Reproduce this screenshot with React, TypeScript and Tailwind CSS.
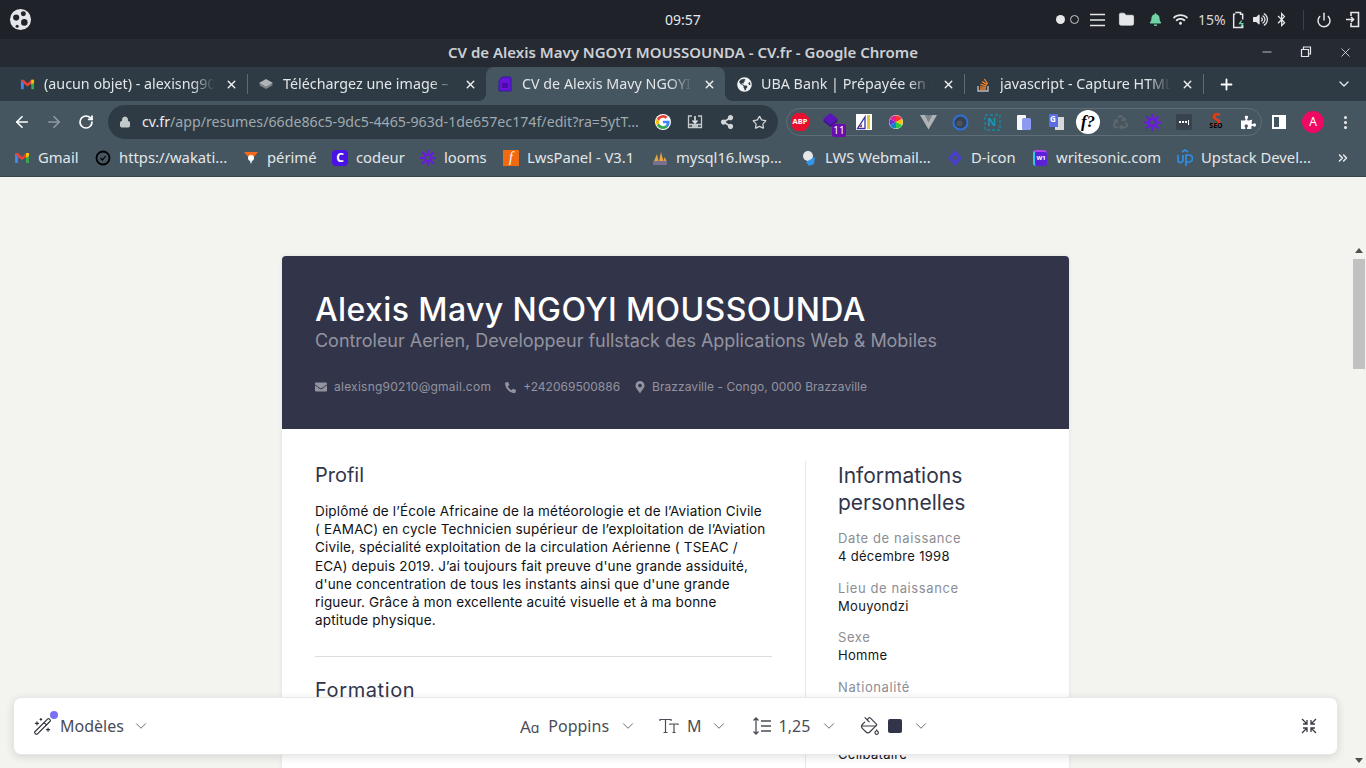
import React from 'react';
import { ArrowLeft, ArrowRight, RotateCw, Lock, Star, Plus, X, ChevronDown, Power, Folder, WandSparkles, PaintBucket, MoreVertical, ChevronsRight, Minus } from 'lucide-react';
import { FaBell, FaBluetoothB, FaEnvelope, FaGlobeAmericas, FaMapMarkerAlt, FaPhoneAlt, FaPuzzlePiece, FaRecycle, FaShareAlt, FaVolumeUp, FaWifi } from 'react-icons/fa';

const ui = "font-['Noto_Sans',sans-serif]";
const page = "font-['Inter',sans-serif]";

const Gmail = ({ size = 16 }: { size?: number }) => (
  <svg width={size} height={size} viewBox="0 0 16 16" className="shrink-0">
    <path d="M1 3v10h3V7z" fill="#4285f4" />
    <path d="M15 3v10h-3V7z" fill="#34a853" />
    <path d="M1 3l3 0 4 4 4-4 3 0-3 4-4 3-4-3z" fill="#ea4335" />
    <path d="M12 3l3 0 0 3-3 2z" fill="#fbbc04" />
  </svg>
);

const Flower = ({ size = 16 }: { size?: number }) => (
  <svg width={size} height={size} viewBox="0 0 16 16" className="shrink-0">
    <circle cx="8" cy="8" r="3.4" fill="none" stroke="#6a1be0" strokeWidth="2.400" />
    <g stroke="#6a1be0" strokeWidth="2.100">
      <path d="M8 0v3.500M8 12.500V16M0 8h3.500M12.500 8H16M2.300 2.300l2.500 2.500M11.200 11.200l2.500 2.500M13.700 2.300l-2.500 2.500M4.800 11.200l-2.500 2.500" />
    </g>
  </svg>
);

const Tab = ({ icon, title, active }: { icon: React.ReactNode; title: string; active?: boolean }) => (
  <div className={`relative flex h-full w-[239px] shrink-0 items-center pl-[11px] pr-[9px] ${active ? 'rounded-t-lg bg-[#455661]' : ''}`}>
    {active && <span className="absolute bottom-0 -left-2 h-2 w-2 bg-[radial-gradient(circle_at_0_0,transparent_8px,#455661_8px)]" />}
    {active && <span className="absolute bottom-0 -right-2 h-2 w-2 bg-[radial-gradient(circle_at_100%_0,transparent_8px,#455661_8px)]" />}
    <span className="flex w-4 shrink-0 justify-center">{icon}</span>
    <span className="ml-[9px] w-[176px] overflow-hidden whitespace-nowrap text-[14.3px] text-[#e3e5e6] [mask-image:linear-gradient(to_right,black_84%,transparent_97%)]">{title}</span>
    <X size={13} strokeWidth={2.6} className="ml-[5px] shrink-0 text-[#f1f3f4]" />
  </div>
);

const Sep = () => <div className="-mr-px h-5 w-px shrink-0 bg-[#5f6b73]" />;

const Mark = ({ icon, label, w }: { icon: React.ReactNode; label: string; w: string }) => (
  <div className={`flex shrink-0 items-center gap-2 ${w}`}>
    <span className="flex w-4 shrink-0 justify-center">{icon}</span>
    <span className="whitespace-nowrap text-[14.8px] text-[#e3e6e8]">{label}</span>
  </div>
);

const Ext = ({ children }: { children: React.ReactNode }) => (
  <div className="relative flex h-6 w-8 shrink-0 items-center justify-center">{children}</div>
);

const TopPanel = () => (
  <div className="flex h-[39px] shrink-0 items-center bg-[#1f2229] text-[#e6e7e8]">
    <div className="flex w-[41px] justify-center">
      <svg width="23" height="23" viewBox="0 0 24 24">
        <circle cx="12" cy="12" r="11" fill="#e4e6e9" />
        <circle cx="7.5" cy="10" r="3.2" fill="#20232b" />
        <circle cx="15" cy="6" r="2.6" fill="#20232b" />
        <circle cx="16" cy="15" r="3.4" fill="#20232b" />
        <circle cx="8.5" cy="19" r="1.6" fill="#20232b" />
      </svg>
    </div>
    <div className={`${ui} ml-[622px] w-[40px] text-center text-[14px]`}>09:57</div>
    <div className="ml-[353px] flex items-center">
      <span className="h-[9px] w-[9px] rounded-full bg-[#e6e7e8]" />
      <span className="ml-[5px] h-[9px] w-[9px] rounded-full border border-[#c9cbce]" />
      <svg width="15" height="14" viewBox="0 0 15 14" className="ml-[11px]"><path d="M0 1.500h15M0 7h15M0 12.500h15" stroke="#e6e7e8" strokeWidth="1.600" /></svg>
      <Folder size={17} fill="#e6e7e8" strokeWidth={1} className="ml-[13px]" />
      <FaBell size={13} color="#6fd3a4" className="ml-[14px]" />
      <FaWifi size={15} className="ml-[11px]" />
      <span className={`${ui} ml-[10px] text-[14px] text-[#d7d9dc]`}>15%</span>
      <svg width="15" height="18" viewBox="0 0 14 17" className="ml-[6px]">
        <path d="M3 1.500h5v1.500h2v5M10 13v2.500H1.500V3H3" fill="none" stroke="#e6e7e8" strokeWidth="1.400" />
        <path d="M9 9l-2 3h3l-1.500 3" fill="none" stroke="#6fd3a4" strokeWidth="1.200" />
      </svg>
      <FaVolumeUp size={15} className="ml-[6px]" />
      <FaBluetoothB size={15} className="ml-[6px]" />
      <div className="ml-[14px] h-5 w-px bg-[#3d4047]" />
      <Power size={16} strokeWidth={2.200} className="ml-[12px]" />
      <svg width="14" height="17" viewBox="0 0 14 17" className="ml-[14px]">
        <path d="M5 5V1.500h7.500v14H5V12" fill="none" stroke="#e6e7e8" strokeWidth="1.600" />
        <path d="M0 8.500h7M5 6l2.500 2.500L5 11" fill="none" stroke="#e6e7e8" strokeWidth="1.600" />
      </svg>
    </div>
  </div>
);

const TitleBar = () => (
  <div className="relative flex h-[28px] shrink-0 items-center justify-center bg-[#262a33] pb-[2px]">
    <span className={`${ui} text-[15px] font-semibold text-[#cdd0d3]`}>CV de Alexis Mavy NGOYI MOUSSOUNDA - CV.fr - Google Chrome</span>
    <div className="absolute right-[13px] flex items-center gap-[26px] text-[#e6e7e8]">
      <Minus size={14} strokeWidth={1.300} />
      <svg width="12" height="12" viewBox="0 0 12 12"><path d="M3.500 3V1h7v7H8.500M1.500 3.500h7v7h-7z" fill="none" stroke="#e6e7e8" strokeWidth="1.200" /></svg>
      <X size={15} strokeWidth={1.300} />
    </div>
  </div>
);

const TabStrip = () => (
  <div className={`${ui} flex h-[34px] shrink-0 items-center bg-[#2e3b44] pl-2`}>
    <Tab icon={<Gmail size={15} />} title="(aucun objet) - alexisng90210@gmail.com" />
    <Sep />
    <Tab
      icon={<svg width="16" height="16" viewBox="0 0 16 16"><path d="M8 3l7 4-7 4-7-4z" fill="#aeb4b8" /><path d="M1 9l7 4 7-4-2-1-5 3-5-3z" fill="#7f878c" /></svg>}
      title="Téléchargez une image – Postimages"
    />
    <Tab
      active
      icon={<svg width="14" height="16" viewBox="0 0 14 16"><path d="M4 1h8l1 1v13H1V5z" fill="#6a12d8" stroke="#2c1a9c" strokeWidth="1" /><rect x="4" y="7" width="6" height="5" fill="#4a0ca8" /></svg>}
      title="CV de Alexis Mavy NGOYI MOUSSOUNDA"
    />
    <Tab icon={<FaGlobeAmericas size={15} color="#f1f3f4" />} title="UBA Bank | Prépayée en ligne Visa" />
    <Sep />
    <Tab
      icon={<svg width="14" height="16" viewBox="0 0 14 16"><path d="M2 10v5h10v-5" fill="none" stroke="#bcbbbb" strokeWidth="1.400" /><path d="M4 13h6M4 10.800l6 .6M4.500 8.300l5.800 1.500M6 5.600l5.200 3M8.300 3l3.500 5" stroke="#f48024" strokeWidth="1.300" /></svg>}
      title="javascript - Capture HTML Canvas"
    />
    <Sep />
    <Plus size={17} strokeWidth={2.600} className="ml-[15px] text-white" />
    <ChevronDown size={16} strokeWidth={2} className="ml-[101px] text-[#e6e7e8]" />
  </div>
);

const Toolbar = () => (
  <div className="flex h-[40px] shrink-0 items-center bg-[#455661] pt-[2px] text-[#e9ebec]">
    <ArrowLeft size={18} strokeWidth={2.200} className="ml-[13px] text-white" />
    <ArrowRight size={18} strokeWidth={2.200} className="ml-[14px] text-[#8f9aa2]" />
    <RotateCw size={16} strokeWidth={2.600} className="ml-[15px] text-white" />
    <div className="ml-[14px] flex h-[34px] w-[670px] shrink-0 items-center rounded-full bg-[#2e3b44] pl-[11px]">
      <Lock size={12} fill="#c3c8cb" stroke="#c3c8cb" />
      <span className={`${ui} ml-[11px] w-[507px] whitespace-nowrap text-[14.2px] text-[#9fa9af]`}><span className="text-[#eceeef]">cv.fr</span>/app/resumes/66de86c5-9dc5-4465-963d-1de657ec174f/edit?ra=5ytT...</span>
      <svg width="16" height="16" viewBox="0 0 48 48" className="ml-[6px] rounded-full bg-white">
        <path d="M44 24c0-1.500-.1-2.900-.4-4H24v8h11a10 10 0 0 1-4.400 6.500l7 5.400C42 36 44 30.500 44 24z" fill="#4285f4" />
        <path d="M24 45c5.700 0 10.500-1.900 14-5.100l-7-5.400c-1.900 1.300-4.300 2-7 2-5.400 0-10-3.600-11.600-8.500l-7.200 5.600C8.700 40.500 15.800 45 24 45z" fill="#34a853" />
        <path d="M12.400 28a12.600 12.600 0 0 1 0-8l-7.200-5.600a21 21 0 0 0 0 19.200z" fill="#fbbc05" />
        <path d="M24 11.500c3 0 5.800 1 8 3.100l6-6A21 21 0 0 0 5.200 14.400l7.200 5.600C14 15.100 18.600 11.500 24 11.500z" fill="#ea4335" />
      </svg>
      <svg width="16" height="16" viewBox="0 0 16 16" className="ml-[16px]">
        <path d="M5 2H1.500v11.500h13V2H11M1.500 10.500h13" fill="none" stroke="#c3c8cb" strokeWidth="1.300" />
        <path d="M8 2v6.500M5.500 6.500L8 9l2.500-2.500M5 12h6" fill="none" stroke="#dfe2e4" strokeWidth="1.600" />
      </svg>
      <FaShareAlt size={14} className="ml-[17px] text-[#d3d6d8]" />
      <Star size={15} strokeWidth={2} className="ml-[18px] text-[#d3d6d8]" />
    </div>
    <div className="ml-[8px] flex h-[28px] w-[476px] shrink-0 items-center rounded-full border border-[#5d6e78]">
      <div className="-ml-[3px] flex items-center">
        <Ext>
          <svg width="20" height="20" viewBox="0 0 20 20"><path d="M6 1h8l5 5v8l-5 5H6l-5-5V6z" fill="#e8102f" /></svg>
          <span className={`${ui} absolute text-[7.500px] font-bold text-white`}>ABP</span>
        </Ext>
        <Ext>
          <svg width="17" height="17" viewBox="0 0 17 17" className="-mt-1 -ml-[4px]"><path d="M8.500 1l7.500 6-7.500 6L1 7z" fill="#5a16b8" /><path d="M1 9l7.500 6 7.500-6-1.500-1-6 4.800-6-4.800z" fill="#3f0f92" /></svg>
          <span className={`${ui} absolute bottom-[-3px] right-[2px] flex h-[13px] w-[14px] items-center justify-center rounded-[2px] bg-[#6a0dad] text-[10px] text-white`}>11</span>
        </Ext>
        <Ext>
          <svg width="16" height="16" viewBox="0 0 16 16"><rect width="16" height="16" fill="#fff" /><path d="M1.500 14.500L9 3v11.500z" fill="none" stroke="#3731a8" strokeWidth="1.300" /><path d="M3 13l3-3v3z" fill="#d8232a" /><rect x="11" y="1" width="3" height="14" fill="#e3c93a" /></svg>
        </Ext>
        <Ext>
          <svg width="16" height="18" viewBox="0 0 16 18"><circle cx="8" cy="9" r="7" fill="#fff" /><path d="M8 9V2.500A6.500 6.500 0 0 1 14 6z" fill="#f33" /><path d="M8 9l6-3a6.500 6.500 0 0 1 0 6z" fill="#ffc800" /><path d="M8 9l6 3a6.500 6.500 0 0 1-6 3.500z" fill="#2ecc40" /><path d="M8 9v6.500A6.500 6.500 0 0 1 2 12z" fill="#18c" /><path d="M8 9L2 12a6.500 6.500 0 0 1 0-6z" fill="#6a2fd0" /><path d="M8 9L2 6a6.500 6.500 0 0 1 6-3.500z" fill="#e91e8c" /></svg>
        </Ext>
        <Ext>
          <svg width="17" height="16" viewBox="0 0 17 16"><path d="M0 1h5l3.500 7L12 1h5L8.500 15.500z" fill="#b0b4b6" /><path d="M5 1h3l.5 1 .5-1h3L8.500 8z" fill="#7f8589" /></svg>
        </Ext>
        <Ext>
          <svg width="17" height="17" viewBox="0 0 17 17"><circle cx="8.500" cy="8.500" r="7" fill="#33424d" stroke="#2f6fd6" strokeWidth="2" /><circle cx="7.500" cy="9.500" r="3" fill="#4a5560" /></svg>
        </Ext>
        <Ext>
          <svg width="17" height="17" viewBox="0 0 17 17"><rect x="1" y="1" width="15" height="15" fill="none" stroke="#0e8ea3" strokeWidth="1.300" strokeDasharray="3 2" /></svg>
          <span className={`${ui} absolute text-[11px] font-bold text-[#0e9ab0]`}>N</span>
        </Ext>
        <Ext>
          <svg width="16" height="17" viewBox="0 0 16 17"><rect x="1" y="1" width="9" height="15" rx="1" fill="#f6f7f9" /><rect x="6" y="4" width="9" height="12" rx="1.500" fill="#8c9af0" /></svg>
        </Ext>
        <Ext>
          <svg width="17" height="17" viewBox="0 0 17 17"><rect x="7" y="3" width="9" height="13" fill="#d7dadc" /><path d="M1 0h9v13H1z" fill="#5a6de6" /></svg>
          <span className={`${ui} absolute left-[10px] top-[3px] text-[8px] font-bold text-white`}>G</span>
        </Ext>
        <Ext>
          <div className="flex h-[24px] w-[24px] items-center justify-center rounded-full bg-white font-['Liberation_Serif',serif] text-[17px] font-bold italic text-black">f?</div>
        </Ext>
        <Ext><FaRecycle size={15} className="text-[#5f676d]" /></Ext>
        <Ext><Flower size={17} /></Ext>
        <Ext>
          <div className="flex h-4 w-4 items-center justify-center gap-[1px] rounded-[2px] bg-[#37424d]">
            <span className="h-[2px] w-[2px] bg-white" /><span className="h-[2px] w-[2px] bg-white" /><span className="h-[2px] w-[2px] bg-white" /><span className="h-[5px] w-px bg-white" />
          </div>
        </Ext>
        <Ext>
          <span className={`${ui} absolute top-[-2px] text-[17px] font-bold leading-[24px] text-[#e23a12]`}>S</span>
          <span className={`${ui} absolute top-[11px] text-[7px] font-bold leading-[10px] text-black`}>SEO</span>
        </Ext>
        <Ext><FaPuzzlePiece size={15} color="#fff" /></Ext>
      </div>
    </div>
    <div className="ml-[10px] flex h-[14px] w-[14px] shrink-0 justify-end border-[2px] border-white"><span className="h-full w-[5px] bg-white" /></div>
    <span className={`${ui} ml-[16px] flex h-[22px] w-[22px] shrink-0 items-center justify-center rounded-full bg-[#ee0a63] text-[12px] text-white`}>A</span>
    <MoreVertical size={17} strokeWidth={2.400} className="ml-[13px] text-[#e9ebec]" />
  </div>
);

const Bookmarks = () => (
  <div className={`${ui} flex h-[36px] shrink-0 items-center border-b border-[#39454d] bg-[#455661] pb-[2px] pl-[14px]`}>
    <Mark w="w-[81px]" label="Gmail" icon={<Gmail />} />
    <Mark w="w-[148px]" label="https://wakati..." icon={<svg width="16" height="16" viewBox="0 0 16 16"><circle cx="8" cy="8" r="6.500" fill="none" stroke="#000" strokeWidth="1.800" /><path d="M5.500 8l2 2 3-4" fill="none" stroke="#000" strokeWidth="1.200" /></svg>} />
    <Mark w="w-[89px]" label="périmé" icon={<svg width="16" height="16" viewBox="0 0 16 16"><path d="M1 2h14l-5 6H6z" fill="#f26a1b" /><circle cx="8" cy="8" r="3" fill="#fff" /><path d="M7 11h2l-1 3z" fill="#fff" /></svg>} />
    <Mark w="w-[88px]" label="codeur" icon={<span className="flex h-4 w-4 items-center justify-center rounded-[4px] bg-[#4a12e6] text-[12px] font-bold leading-none text-white">C</span>} />
    <Mark w="w-[83px]" label="looms" icon={<Flower />} />
    <Mark w="w-[149px]" label="LwsPanel - V3.1" icon={<span className="flex h-4 w-4 items-center justify-center bg-[#f26a0f] font-['Liberation_Serif',serif] text-[14px] italic leading-none text-white">f</span>} />
    <Mark w="w-[149px]" label="mysql16.lwsp..." icon={<svg width="16" height="16" viewBox="0 0 16 16"><path d="M2 11L5 4l1.500 7zM7 11l2-9 2.500 9zM11.500 11l1-4 2 4z" fill="#e8a33c" /><rect x="1" y="11" width="14" height="4" fill="#77708f" /></svg>} />
    <Mark w="w-[146px]" label="LWS Webmail..." icon={<svg width="16" height="16" viewBox="0 0 16 16"><circle cx="7" cy="6" r="5" fill="#e5e7e9" /><path d="M5 12l9-5-1 7-5 2z" fill="#2f96ea" /></svg>} />
    <Mark w="w-[85px]" label="D-icon" icon={<svg width="16" height="16" viewBox="0 0 16 16"><path d="M8 0l7 8-7 8-7-8z" fill="#4a3fd0" /><path d="M8 5l3 3-3 3-3-3z" fill="#455661" /></svg>} />
    <Mark w="w-[145px]" label="writesonic.com" icon={<span className="flex h-4 w-[14px] items-center justify-center rounded-[3px] border-l-2 border-t-2 border-l-[#33c6ef] border-t-[#b044f0] bg-[#5b21d8] text-[6px] font-bold text-white">W1</span>} />
    <Mark w="w-[159px]" label="Upstack Devel..." icon={<svg width="16" height="18" viewBox="0 0 16 18"><path d="M1 6v5a2.500 2.500 0 0 0 5 0V6M9 17V6h3a3 3 0 0 1 0 7H9M5 3l3-2 3 2" fill="none" stroke="#2f8fe6" strokeWidth="1.700" /></svg>} />
    <ChevronsRight size={14} strokeWidth={2.600} className="text-[#e9ebec]" />
  </div>
);

const Info = ({ label, value }: { label: string; value: string }) => (
  <div className="mb-[13.500px]">
    <div className="text-[13px] leading-[18px] tracking-[0.6px] text-[#8b8d94]">{label}</div>
    <div className="text-[13px] leading-[18px] tracking-[0.3px] text-[#15161a]">{value}</div>
  </div>
);

const lines = [
  "Diplômé de l’École Africaine de la météorologie et de l’Aviation Civile",
  "( EAMAC) en cycle Technicien supérieur de l’exploitation de l’Aviation",
  "Civile, spécialité exploitation de la circulation Aérienne ( TSEAC /",
  "ECA) depuis 2019. J’ai toujours fait preuve d'une grande assiduité,",
  "d'une concentration de tous les instants ainsi que d'une grande",
  "rigueur. Grâce à mon excellente acuité visuelle et à ma bonne",
  "aptitude physique.",
];

const Resume = () => (
  <div className={`${page} mx-auto mt-[79px] w-[787px] shrink-0 rounded-t-[4px] bg-white shadow-[0_0_4px_rgba(0,0,0,0.08)]`}>
    <div className="h-[173px] rounded-t-[4px] bg-[#32354a] pl-[33px] pt-[32px]">
      <div className="whitespace-nowrap text-[32px] font-medium leading-[44px] tracking-[0.4px] text-white">Alexis Mavy NGOYI MOUSSOUNDA</div>
      <div className="-mt-[3px] whitespace-nowrap text-[18px] leading-[24px] tracking-[-0.03px] text-[#92939f]">Controleur Aerien, Developpeur fullstack des Applications Web &amp; Mobiles</div>
      <div className="mt-[25px] flex items-center text-[12px] text-[#92939f]">
        <FaEnvelope size={12} className="mr-[7px]" />
        <span className="tracking-[0.25px]">alexisng90210@gmail.com</span>
        <FaPhoneAlt size={11} className="ml-[14px] mr-[7px]" />
        <span>+242069500886</span>
        <FaMapMarkerAlt size={12} className="ml-[14px] mr-[6px]" />
        <span className="tracking-[0.05px]">Brazzaville - Congo, 0000 Brazzaville</span>
      </div>
    </div>
    <div className="flex h-[400px] pl-[33px] pr-[33px] pt-[33px]">
      <div className="w-[457px] shrink-0">
        <h2 className="text-[20px] leading-[27px] text-[#32354a]">Profil</h2>
        <div className="mt-[13px] text-[13.500px] leading-[18.200px] tracking-[0.16px] text-[#101116]">
          {lines.map((line) => (
            <div key={line} className="whitespace-nowrap">{line}</div>
          ))}
        </div>
        <div className="mt-[27px] h-px bg-[#dcdde0]" />
        <h2 className="mt-[20px] text-[20px] leading-[27px] tracking-[0.6px] text-[#32354a]">Formation</h2>
      </div>
      <div className="-mt-px ml-[33px] w-px shrink-0 bg-[#e7e8ea]" />
      <div className="ml-[32px] flex-1">
        <h2 className="text-[21px] leading-[27px] text-[#32354a]">Informations personnelles</h2>
        <div className="mt-[13px]">
          <Info label="Date de naissance" value="4 décembre 1998" />
          <Info label="Lieu de naissance" value="Mouyondzi" />
          <Info label="Sexe" value="Homme" />
          <Info label="Nationalité" value="Congolaise" />
          <Info label="État civil" value="Célibataire" />
        </div>
      </div>
    </div>
  </div>
);

const Scrollbar = () => (
  <div className="flex w-[15px] shrink-0 flex-col items-center bg-[#f3f4ef]">
    <div className="mt-[71px] h-0 w-0 border-x-[4px] border-b-[5px] border-x-transparent border-b-[#505050]" />
    <div className="mt-[6px] h-[110px] w-[12px] bg-[#c1c1c1]" />
    <div className="flex-1" />
    <div className="mb-[5px] h-0 w-0 border-x-[4px] border-t-[5px] border-x-transparent border-t-[#505050]" />
  </div>
);

const Caret = () => <ChevronDown size={18} strokeWidth={1.100} className="-mx-[1.500px] text-[#4a4d57]" />;

// floating editor bar over the resume
const EditorBar = () => (
  <div className={`${ui} absolute bottom-[13px] left-[13px] flex h-[58px] w-[1325px] items-center rounded-lg border border-[#e8e8e8] bg-white text-[16px] text-[#4a4d57] shadow-[0_2px_8px_rgba(0,0,0,0.12)]`}>
    <div className="ml-[19px] flex items-center">
      <span className="relative">
        <WandSparkles size={19} strokeWidth={1.400} className="text-[#2c2e38]" />
        <span className="absolute -right-[6px] -top-[6px] h-2 w-2 rounded-full bg-[#7b70f5]" />
      </span>
      <span className="ml-[8px]">Modèles</span>
      <span className="ml-[10px]"><Caret /></span>
    </div>
    <div className="ml-[371px] flex items-center">
      <span className="text-[17px] leading-none">A<span className="font-['Inter',sans-serif] text-[14px]">ɑ</span></span>
      <span className="ml-[9px]">Poppins</span>
      <span className="ml-[11px]"><Caret /></span>
    </div>
    <div className="ml-[24px] flex items-center">
      <svg width="20" height="16" viewBox="0 0 20 16"><path d="M1 3V1.500h11V3M6.500 1.500v13M4.500 14.500h4M11 7V6h8v1M15 6v8.500M13.500 14.500h3" fill="none" stroke="#4a4d57" strokeWidth="1.200" /></svg>
      <span className="ml-[8px]">M</span>
      <span className="ml-[10px]"><Caret /></span>
    </div>
    <div className="ml-[25px] flex items-center">
      <svg width="20" height="18" viewBox="0 0 20 18"><path d="M4 1v16M1.500 3.500L4 1l2.500 2.500M1.500 14.500L4 17l2.500-2.500M9 4h10M9 9h10M9 14h10" fill="none" stroke="#4a4d57" strokeWidth="1.300" /></svg>
      <span className="ml-[7px]">1,25</span>
      <span className="ml-[11px]"><Caret /></span>
    </div>
    <div className="ml-[24px] flex items-center">
      <PaintBucket size={20} strokeWidth={1.400} className="text-[#3a3c46]" />
      <span className="ml-[8px] h-[14px] w-[14px] rounded-[2px] bg-[#32354a]" />
      <span className="ml-[11px]"><Caret /></span>
    </div>
    <svg width="16" height="16" viewBox="0 0 16 16" className="ml-auto mr-[20px]">
      <path d="M1 1l5 5M6 2v4H2M15 1l-5 5M10 2v4h4M1 15l5-5M6 14v-4H2M15 15l-5-5M10 14v-4h4" fill="none" stroke="#3a3c46" strokeWidth="1.300" />
    </svg>
  </div>
);

const App: React.FC = () => (
  <div className="relative flex h-[768px] w-[1366px] flex-col overflow-hidden">
    <TopPanel />
    <TitleBar />
    <TabStrip />
    <Toolbar />
    <Bookmarks />
    <div className="flex min-h-0 flex-1 bg-[#f3f4ef]">
      <div className="flex min-w-0 flex-1 flex-col overflow-hidden">
        <Resume />
      </div>
      <Scrollbar />
    </div>
    <EditorBar />
  </div>
);

export default App;
